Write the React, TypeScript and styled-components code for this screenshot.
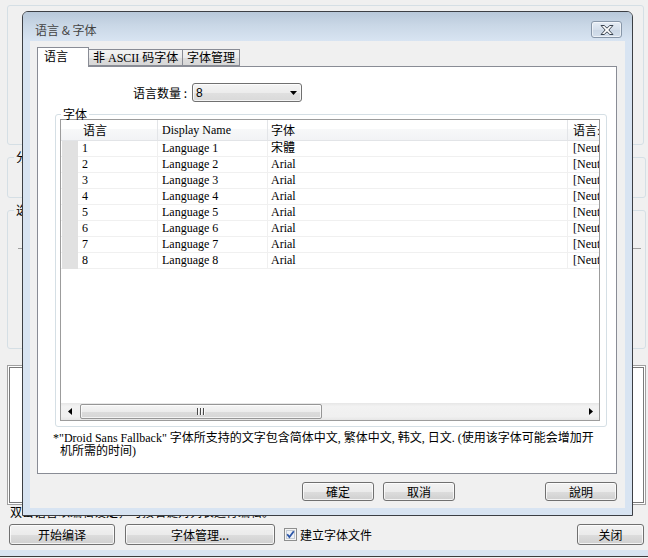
import React from "react";
import styled, { createGlobalStyle } from "styled-components";

const CJK = `"Noto Sans CJK SC", "Liberation Sans", sans-serif`;
const SERIF = `"Liberation Serif", "Noto Sans CJK SC", serif`;

const GlobalStyle = createGlobalStyle`
  html, body { margin: 0; padding: 0; background: #f0f0f0; }
  body { font-family: ${CJK}; font-size: 12px; color: #000; }
  * { box-sizing: border-box; }
`;

/* ---------- parent window ---------- */
const Desktop = styled.div`
  position: relative;
  width: 648px;
  height: 558px;
  overflow: hidden;
  background: #f0f0f0;
  display: flex;
  flex-direction: column;
`;

const ParentBody = styled.div`
  flex: 1;
  display: flex;
  flex-direction: column;
  padding: 5px 2px 0 7px;
`;

const TopGroup = styled.div`
  height: 140px;
  margin-right: 2px;
  border: 1px solid #d5dfe5;
  border-radius: 3px;
`;

const GroupBox = styled.fieldset<{ $mt: number; $h: number }>`
  margin: ${(p) => p.$mt}px 0 0 0;
  padding: 0;
  min-width: 0;
  height: ${(p) => p.$h}px;
  border: 1px solid #d5dfe5;
  border-radius: 3px;
`;

const Legend = styled.legend<{ $ml?: number }>`
  margin-left: ${(p) => p.$ml ?? 6}px;
  padding: 0 2px;
  height: 12px;
  line-height: 12px;
  font-family: ${CJK};
  font-size: 12px;
`;

const Rule = styled.div`
  height: 1px;
  margin: 32px 4px 0 10px;
  background: #a0a0a0;
`;

const LogBox = styled.div`
  margin-top: 16px;
  height: 140px;
  background: #fff;
  border: 1px solid #a0a0a0;
  box-shadow: inset 0 0 0 1px #fff, inset 0 0 0 2px #7a7a7a;
`;

const Hint = styled.div`
  margin: 1px 0 0 3px;
  line-height: 12px;
  font-size: 12px;
  font-family: ${CJK};
`;

const ParentButtons = styled.div`
  display: flex;
  align-items: center;
  margin-top: 6px;
  height: 21px;
`;

const WinButton = styled.button<{ $w: number; $h?: number; $ml?: string }>`
  flex: none;
  width: ${(p) => p.$w}px;
  height: ${(p) => p.$h ?? 19}px;
  margin-left: ${(p) => p.$ml ?? "0"};
  padding: 0;
  border: 1px solid #707070;
  border-radius: 3px;
  background: linear-gradient(#f2f2f2 0%, #ebebeb 50%, #dddddd 51%, #cfcfcf 100%);
  box-shadow: inset 0 0 0 1px rgba(255, 255, 255, 0.75);
  font-family: ${CJK};
  font-size: 12px;
  line-height: 14px;
  color: #000;
`;

const CheckLabel = styled.label`
  display: flex;
  align-items: center;
  gap: 3px;
  margin-left: 9px;
  font-family: ${CJK};
  font-size: 12px;
  line-height: 14px;
`;

const WindowEdge = styled.div`
  flex: none;
  height: 8px;
  background: linear-gradient(#d9e4f1 0 6px, #3c3c3c 6px 7px, #f0f0f0 7px);
`;

/* ---------- dialog ---------- */
const Dialog = styled.div`
  position: absolute;
  left: 22px;
  top: 11px;
  width: 611px;
  height: 505px;
  border: 1px solid #3c3f44;
  border-radius: 6px 6px 0 0;
  background: #d8e4f2;
  display: flex;
  flex-direction: column;
`;

const TitleBar = styled.div`
  flex: none;
  height: 29px;
  display: flex;
  align-items: flex-start;
  padding-left: 12px;
  border-radius: 5px 5px 0 0;
  background: linear-gradient(#b8c8d9 0%, #c9d7e6 45%, #d8e4f2 100%);
`;

const Title = styled.div`
  padding-top: 10px;
  line-height: 16px;
  font-family: ${CJK};
  font-size: 12px;
  color: #434343;
`;

const CloseButton = styled.div`
  margin: 9px 10px 0 auto;
  width: 31px;
  height: 17px;
  border: 1px solid #8796a8;
  border-radius: 3px;
  background: linear-gradient(#e6edf5, #d5dfeb 50%, #cad6e4 51%, #d4dfec);
  box-shadow: inset 0 0 0 1px rgba(255, 255, 255, 0.55);
  display: flex;
  align-items: center;
  justify-content: center;
`;

const Client = styled.div`
  flex: 1;
  margin: 0 7px 7px;
  background: #f0f0f0;
  padding: 6px 8px 0 7px;
  display: flex;
  flex-direction: column;
`;

const TabStrip = styled.div`
  display: flex;
  align-items: flex-end;
  height: 19px;
  position: relative;
  z-index: 1;
`;

const Tab = styled.div<{ $w: number; $active?: boolean }>`
  flex: none;
  width: ${(p) => p.$w}px;
  height: ${(p) => (p.$active ? 20 : 17)}px;
  margin-bottom: ${(p) => (p.$active ? -1 : 0)}px;
  margin-left: ${(p) => (p.$active ? 0 : -1)}px;
  padding: ${(p) => (p.$active ? "2px 0 0 6px" : "1px 0 0 4px")};
  position: relative;
  z-index: ${(p) => (p.$active ? 2 : 1)};
  border: 1px solid #898c95;
  border-bottom: ${(p) => (p.$active ? "none" : "1px solid #898c95")};
  background: ${(p) =>
    p.$active ? "#fff" : "linear-gradient(#f3f3f3, #ebebeb 50%, #dedede 51%, #d7d7d7)"};
  font-family: ${SERIF};
  font-size: 12px;
  line-height: 15px;
  white-space: nowrap;
`;

const Panel = styled.div`
  flex: none;
  width: 580px;
  height: 408px;
  border: 1px solid #898c95;
  background: #fff;
  display: flex;
  flex-direction: column;
`;

const CountRow = styled.div`
  display: flex;
  align-items: center;
  margin-top: 16px;
  height: 19px;
`;

const CountLabel = styled.div`
  width: 149px;
  text-align: right;
  font-family: ${CJK};
  font-size: 12px;
  line-height: 14px;
`;

const Select = styled.div`
  margin-left: 5px;
  width: 110px;
  height: 19px;
  border: 1px solid #707070;
  border-radius: 3px;
  background: linear-gradient(#f4f4f4, #ececec 50%, #e0e0e0 51%, #d9d9d9);
  box-shadow: inset 0 0 0 1px rgba(255, 255, 255, 0.7);
  display: flex;
  align-items: center;
  justify-content: space-between;
  padding: 0 4px 0 3px;
  font-family: "Liberation Sans", sans-serif;
  font-size: 12px;
`;

const FontGroup = styled.fieldset`
  margin: 6px 0 0 17px;
  padding: 0 6px 0 4px;
  min-width: 0;
  width: 552px;
  height: 319px;
  border: 1px solid #d5dfe5;
  border-radius: 3px;
`;

const ListView = styled.div`
  margin-top: -1px;
  width: 540px;
  height: 302px;
  border: 1px solid #9c9c9c;
  background: #fff;
  display: flex;
  flex-direction: column;
  overflow: hidden;
`;

const HeaderRow = styled.div`
  flex: none;
  display: grid;
  grid-template-columns: 97px 110px 300px 100px;
  height: 21px;
  border-bottom: 1px solid #e2e4e7;
  background: linear-gradient(#ffffff 0%, #ffffff 45%, #f7f8f9 46%, #f2f3f5 100%);
`;

const HeaderCell = styled.div<{ $pl: number }>`
  display: flex;
  align-items: center;
  padding-left: ${(p) => p.$pl}px;
  border-right: 1px solid #e3e5e8;
  font-family: ${SERIF};
  font-size: 12px;
  white-space: nowrap;
  overflow: hidden;
`;

const Body = styled.div`
  flex: 1;
  overflow: hidden;
`;

const Row = styled.div`
  display: grid;
  grid-template-columns: 1px 16px 80px 110px 300px 100px;
  height: 16px;
`;

const Strip = styled.div`
  background: #e1e1e1;
`;

const Cell = styled.div<{ $pl?: number; $edge?: boolean }>`
  padding-left: ${(p) => p.$pl ?? 0}px;
  border-bottom: 1px solid #f0f0f0;
  border-right: ${(p) => (p.$edge ? "1px solid #f0f0f0" : "none")};
  font-family: ${SERIF};
  font-size: 12px;
  line-height: 15px;
  white-space: nowrap;
  overflow: hidden;
`;

const HScroll = styled.div`
  flex: none;
  height: 17px;
  display: flex;
  align-items: center;
  background: linear-gradient(#e6e6e6, #f2f2f2 20%, #f0f0f0 80%, #e6e6e6);
`;

const ArrowBox = styled.div`
  width: 17px;
  height: 17px;
  flex: none;
  display: flex;
  align-items: center;
  justify-content: center;
`;

const Track = styled.div`
  flex: 1;
  height: 17px;
  display: flex;
  align-items: center;
`;

const Thumb = styled.div`
  margin-left: 2px;
  width: 242px;
  height: 15px;
  border: 1px solid #969696;
  border-radius: 2px;
  background: linear-gradient(#f5f5f5, #ececec 50%, #dcdcdc 51%, #d6d6d6);
  box-shadow: inset 0 0 0 1px rgba(255, 255, 255, 0.7);
  display: flex;
  align-items: center;
  justify-content: center;
  gap: 1px;
`;

const Grip = styled.div`
  width: 1px;
  height: 7px;
  background: #4a4a4a;
  box-shadow: 1px 0 0 #fafafa;
  margin-right: 1px;
`;

const Footnote = styled.div`
  margin-top: 5px;
  padding-left: 22px;
  text-indent: -7px;
  font-family: ${SERIF};
  font-size: 12px;
  line-height: 13px;
  white-space: nowrap;
`;

const ButtonBar = styled.div`
  display: flex;
  margin-top: 8px;
  padding-left: 265px;
  width: 580px;
  gap: 9px;
`;

const rows: [string, string, string][] = [
  ["1", "Language 1", "宋體"],
  ["2", "Language 2", "Arial"],
  ["3", "Language 3", "Arial"],
  ["4", "Language 4", "Arial"],
  ["5", "Language 5", "Arial"],
  ["6", "Language 6", "Arial"],
  ["7", "Language 7", "Arial"],
  ["8", "Language 8", "Arial"],
];

function CloseGlyph() {
  return (
    <svg width="14" height="10" viewBox="0 0 14 10">
      <polygon
        points="1,0.5 4.2,0.5 7,3.2 9.8,0.5 13,0.5 8.8,5 13,9.5 9.8,9.5 7,6.8 4.2,9.5 1,9.5 5.2,5"
        fill="#fff"
        stroke="#3b4450"
        strokeWidth="1"
        strokeLinejoin="round"
      />
    </svg>
  );
}

function CheckIcon() {
  return (
    <svg width="13" height="13" viewBox="0 0 13 13">
      <rect x="0.5" y="0.5" width="12" height="12" fill="#f4f4f4" stroke="#8e8f8f" />
      <rect x="2.5" y="2.5" width="8" height="8" fill="#eef1f5" stroke="#c3cad3" />
      <path d="M3.2 6.3 L5.4 9 L9.8 3.3" stroke="#2b56a8" strokeWidth="1.8" fill="none" />
    </svg>
  );
}

function ArrowLeft() {
  return (
    <svg width="4" height="7" viewBox="0 0 4 7">
      <polygon points="4,0 0,3.5 4,7" fill="#000" />
    </svg>
  );
}

function ArrowRight() {
  return (
    <svg width="4" height="7" viewBox="0 0 4 7">
      <polygon points="0,0 4,3.5 0,7" fill="#000" />
    </svg>
  );
}

function DropArrow() {
  return (
    <svg width="7" height="4" viewBox="0 0 7 4">
      <polygon points="0,0 7,0 3.5,4" fill="#000" />
    </svg>
  );
}

export default function App() {
  return (
    <>
      <GlobalStyle />
      <Desktop>
        <ParentBody>
          <TopGroup />
          <GroupBox $mt={6} $h={47}>
            <Legend>分类</Legend>
          </GroupBox>
          <GroupBox $mt={6} $h={145}>
            <Legend>选项</Legend>
            <Rule />
          </GroupBox>
          <LogBox />
          <Hint>双击语言以编辑设定，可按右键对列表进行编辑。</Hint>
          <ParentButtons>
            <WinButton $w={106} $h={21} $ml="2px">开始编译</WinButton>
            <WinButton $w={150} $h={21} $ml="10px">字体管理...</WinButton>
            <CheckLabel>
              <CheckIcon />
              建立字体文件
            </CheckLabel>
            <WinButton $w={67} $h={21} $ml="auto" style={{ marginRight: 2 }}>
              关闭
            </WinButton>
          </ParentButtons>
        </ParentBody>
        <WindowEdge />

        <Dialog>
          <TitleBar>
            <Title>语言 &amp; 字体</Title>
            <CloseButton>
              <CloseGlyph />
            </CloseButton>
          </TitleBar>
          <Client>
            <TabStrip>
              <Tab $w={52} $active>
                语言
              </Tab>
              <Tab $w={95}>非 ASCII 码字体</Tab>
              <Tab $w={58}>字体管理</Tab>
            </TabStrip>
            <Panel>
              <CountRow>
                <CountLabel>语言数量 :</CountLabel>
                <Select>
                  <span>8</span>
                  <DropArrow />
                </Select>
              </CountRow>
              <FontGroup>
                <Legend $ml={1}>字体</Legend>
                <ListView>
                  <HeaderRow>
                    <HeaderCell $pl={22}>语言</HeaderCell>
                    <HeaderCell $pl={4}>Display Name</HeaderCell>
                    <HeaderCell $pl={3}>字体</HeaderCell>
                    <HeaderCell $pl={5}>语言:</HeaderCell>
                  </HeaderRow>
                  <Body>
                    {rows.map(([n, name, font]) => (
                      <Row key={n}>
                        <Cell />
                        <Strip />
                        <Cell $pl={4} $edge>
                          {n}
                        </Cell>
                        <Cell $pl={4} $edge>
                          {name}
                        </Cell>
                        <Cell $pl={3} $edge>
                          {font}
                        </Cell>
                        <Cell $pl={5}>[Neutral]</Cell>
                      </Row>
                    ))}
                  </Body>
                  <HScroll>
                    <ArrowBox>
                      <ArrowLeft />
                    </ArrowBox>
                    <Track>
                      <Thumb>
                        <Grip />
                        <Grip />
                        <Grip />
                      </Thumb>
                    </Track>
                    <ArrowBox>
                      <ArrowRight />
                    </ArrowBox>
                  </HScroll>
                </ListView>
              </FontGroup>
              <Footnote>
                *"Droid Sans Fallback" 字体所支持的文字包含简体中文, 繁体中文, 韩文, 日文. (使用该字体可能会增加开
                <br />
                机所需的时间)
              </Footnote>
            </Panel>
            <ButtonBar>
              <WinButton $w={72}>確定</WinButton>
              <WinButton $w={72}>取消</WinButton>
              <WinButton $w={72} $ml="auto">
                說明
              </WinButton>
            </ButtonBar>
          </Client>
        </Dialog>
      </Desktop>
    </>
  );
}
